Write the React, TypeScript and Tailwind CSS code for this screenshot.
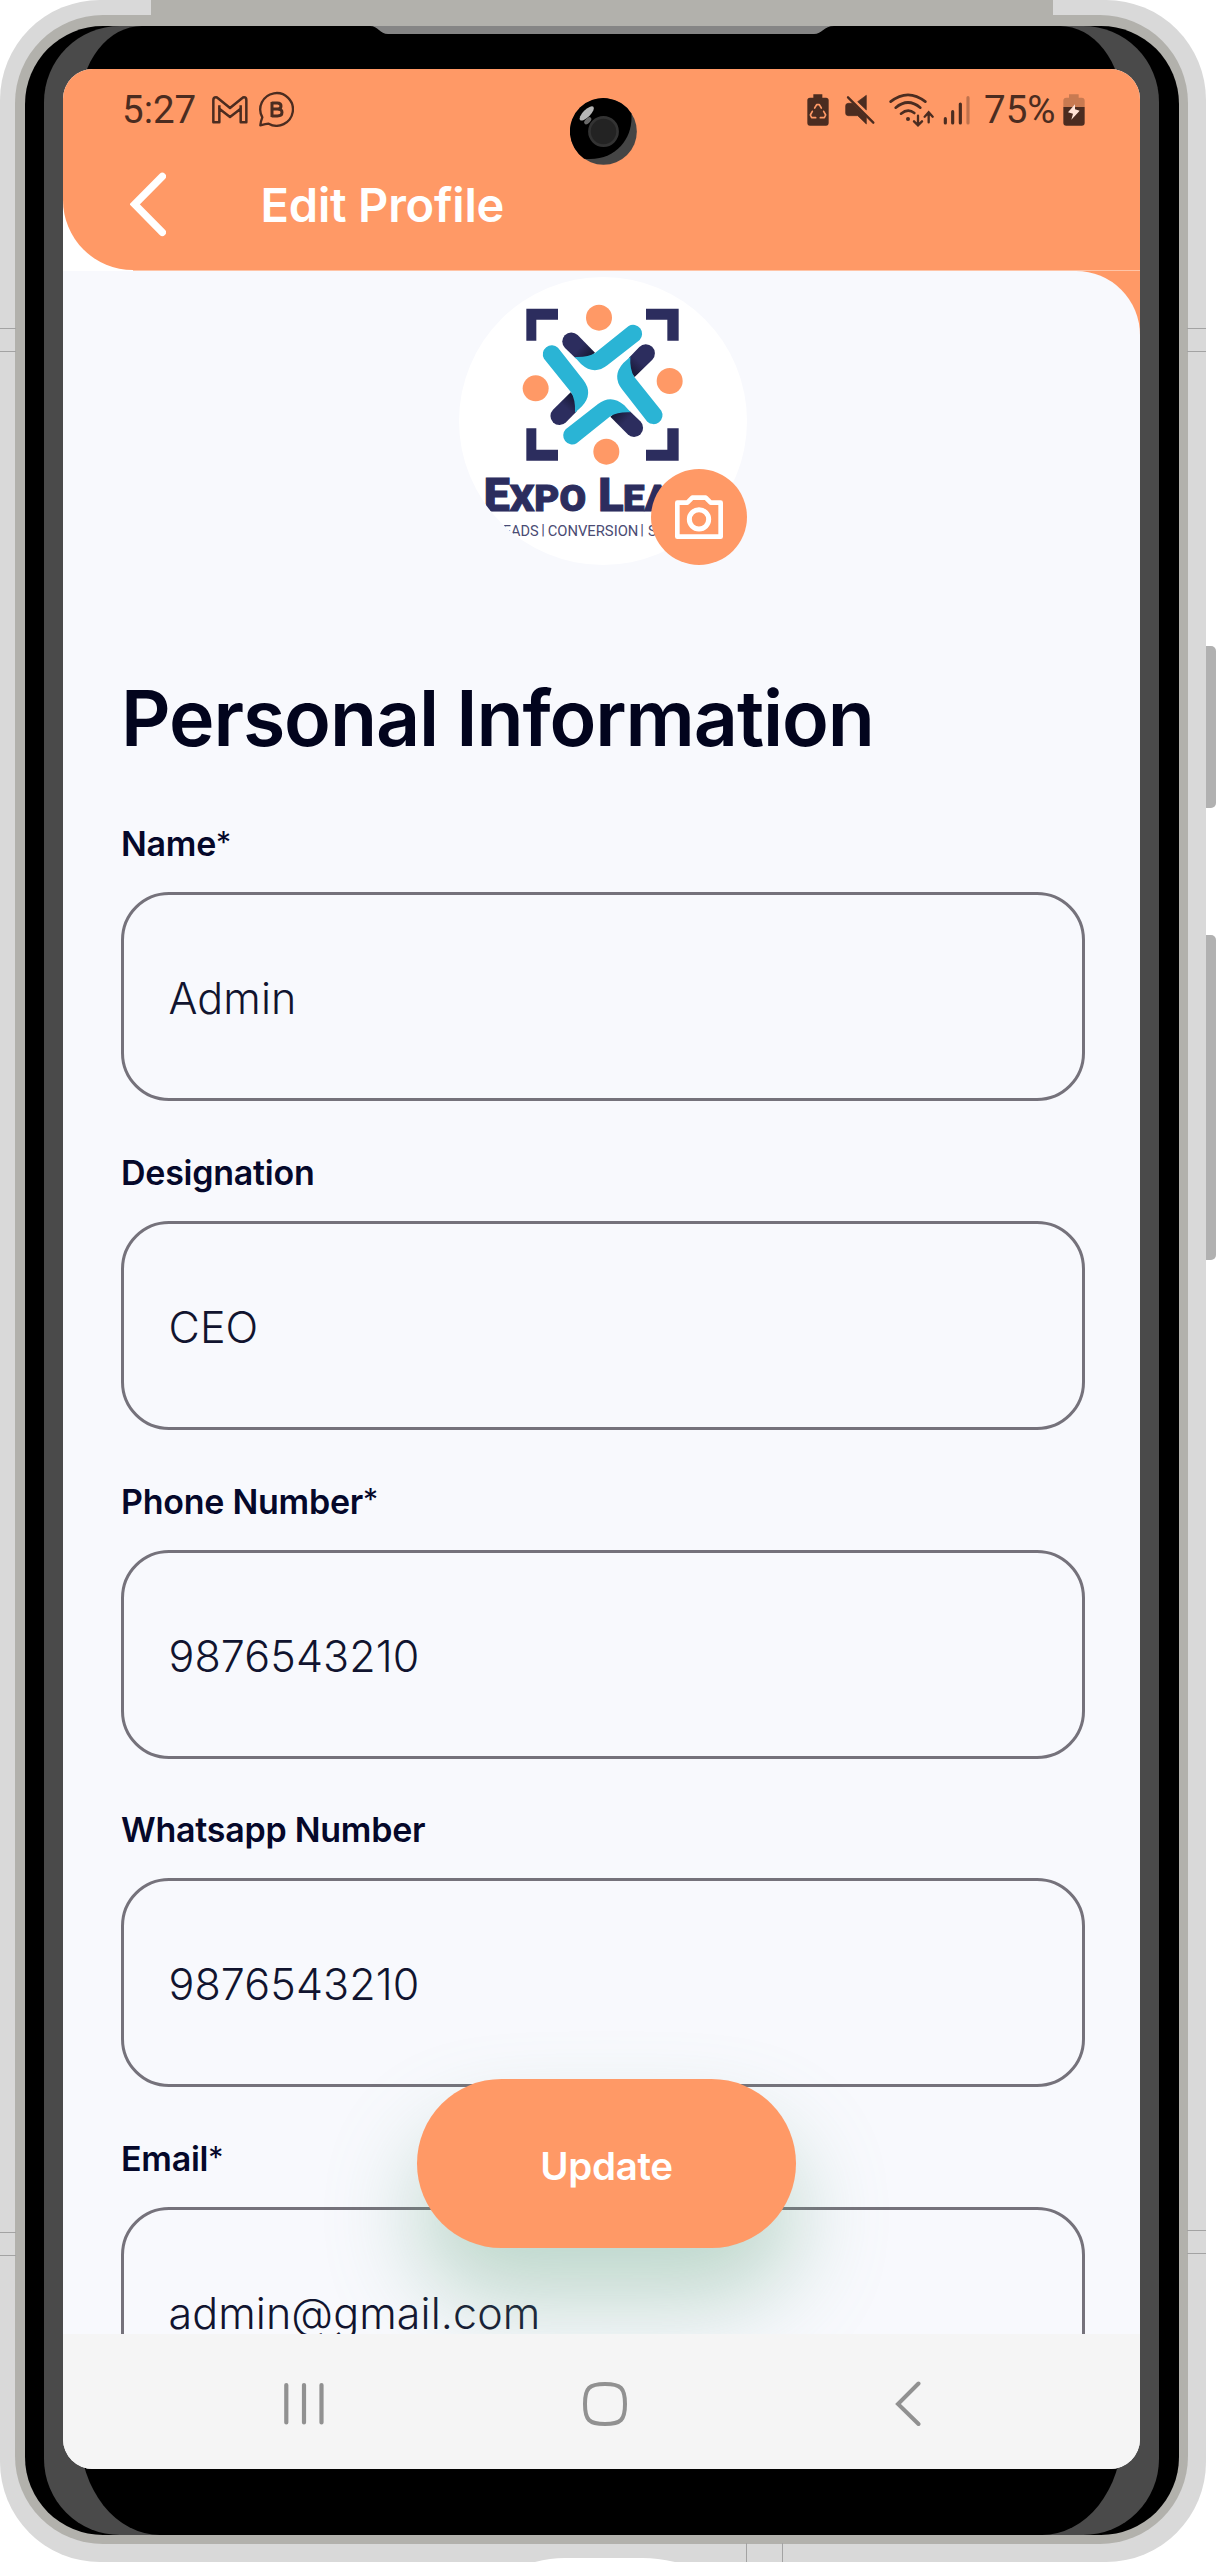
import type { ReactNode } from "react";

const INK = "#4b2c20";

function GmailIcon() {
  return (
    <svg className="h-[35px] w-[35.7px]" viewBox="637 270 107 105" fill="none" stroke={INK} strokeWidth="7.5" strokeLinejoin="round">
      <path d="M641 294 Q641 286 649 286 Q652 286 655 289 L691 318 L727 289 Q730 286 733 286 Q740 286 740 294 V361 H723 V320 L691 345 L659 320 V361 H641 Z" />
      <path d="M659 320 V310 M723 320 V310" />
    </svg>
  );
}

function BusinessChatIcon() {
  return (
    <svg className="h-[36px] w-[36px]" viewBox="776 271 108 108" fill="none" stroke={INK} strokeWidth="7">
      <path d="M789 350 A49 49 0 1 1 808 369 Q800 370 783 374 Q784 362 789 350 Z" strokeLinejoin="round" />
      <path d="M817 307 H834 Q845 307 845 316 Q845 325 834 325 H817 M834 325 Q848 325 848 335 Q848 346 834 346 H817 M818 304 V349" strokeWidth="9" />
    </svg>
  );
}

function BatteryRecycleIcon() {
  return (
    <svg className="h-[35px] w-[22px]" viewBox="32 270 66 105">
      <path d="M51 277 H78 V287 H89 Q97 287 97 295 V362 Q97 371 89 371 H41 Q33 371 33 362 V295 Q33 287 41 287 H51 Z" fill={INK} />
      <g fill="none" stroke="#ff9966" strokeWidth="5" strokeLinecap="round" strokeLinejoin="round">
        <path d="M55 318 L61 308 H69 L75 318" />
        <path d="M82 328 L88 339 L84 347 H72" />
        <path d="M48 328 L42 339 L46 347 H58" />
      </g>
    </svg>
  );
}

function MuteIcon() {
  return (
    <svg className="h-[35px] w-[30px]" viewBox="146 270 90 105">
      <path d="M210 280 V324 L184 299 Z" fill={INK} stroke={INK} strokeWidth="2" strokeLinejoin="round" />
      <path d="M156 304 H168 L210 344 V366 L184 341 H156 Q148 341 148 333 V312 Q148 304 156 304 Z" fill={INK} stroke={INK} strokeWidth="2" />
      <path d="M155 286 L231 362" stroke={INK} strokeWidth="7" strokeLinecap="round" />
    </svg>
  );
}

function WifiIcon() {
  return (
    <svg className="h-[35px] w-[45px]" viewBox="278 270 135 105" fill="none" stroke={INK} strokeWidth="8" strokeLinecap="round">
      <path d="M283 299 Q335 258 387 299" />
      <path d="M298 317 Q335 286 372 317" />
      <path d="M314 335 Q335 318 354 333" />
      <circle cx="335" cy="351" r="6" fill={INK} stroke="none" />
      <path d="M365 341 V368 M353 358 L365 370 L377 358 M397 361 V333 M385 344 L397 331 L409 344" strokeWidth="7" />
    </svg>
  );
}

function SignalIcon() {
  return (
    <svg className="h-[35px] w-[27px]" viewBox="440 270 81 105" stroke={INK} strokeWidth="9.5" strokeLinecap="round">
      <path d="M447 350 V363 M469 329 V363 M492 306 V363" />
      <path d="M515 287 V363" opacity="0.35" />
    </svg>
  );
}

function BatteryIcon() {
  return (
    <svg className="h-[35px] w-[22px]" viewBox="802 270 66 105">
      <path d="M820 277 H849 V287 H858 Q867 287 867 296 V315 H803 V296 Q803 287 812 287 H820 Z" fill="#c87a51" />
      <path d="M803 315 H867 V362 Q867 371 858 371 H812 Q803 371 803 362 Z" fill={INK} />
      <path d="M838 307 L817 331 L832 335 L827 353 L852 326 L838 322 Z" fill="#ffe3d6" />
    </svg>
  );
}

function StatusBar() {
  return (
    <div className="flex h-[80px] items-center pl-[59px] pr-[55px] font-['Roboto'] text-[38.5px] text-[#4b2c20]">
      <span className="mt-px w-[90px]">5:27</span>
      <GmailIcon />
      <span className="w-[10.5px]" />
      <BusinessChatIcon />
      <span className="flex-1" />
      <BatteryRecycleIcon />
      <span className="w-4" />
      <MuteIcon />
      <span className="w-[14px]" />
      <WifiIcon />
      <span className="w-[9px]" />
      <SignalIcon />
      <span className="mt-px ml-[14.5px] w-[79px]">75%</span>
      <BatteryIcon />
    </div>
  );
}

function Logo() {
  return (
    <svg className="size-full" viewBox="58 50 864 864">
      <defs>
        <linearGradient id="arm" x1="380" y1="235" x2="450" y2="300" gradientUnits="userSpaceOnUse">
          <stop offset="0.5" stopColor="#2c2d5e" />
          <stop offset="1" stopColor="#14152f" />
        </linearGradient>
      </defs>
      <path
        fill="#2c2d5e"
        d="M260 145H355V178H290V241H260Z M619 145H717V241H683V178H619Z M260 504H290V568H355V601H260Z M683 504H717V601H619V568H683Z"
      />
      {[0, 90, 180, 270].map((angle) => (
        <g key={angle} transform={`rotate(${angle} 489 373)`}>
          <circle cx="478" cy="172" r="39" fill="#ff9966" />
          <path d="M376 263 A27 27 0 0 1 414 224 L466 277 L440 300 L408 294 Z" fill="url(#arm)" />
          <path d="M405 290 Q444 292 466 278 L567 197 A27 27 0 0 1 600 239 L503 315 Q463 346 424 311 Z" fill="#2ab4d5" />
        </g>
      ))}
      <g fill="#2c2d5e" stroke="#2c2d5e" strokeWidth="3" className="font-['Roboto'] font-black">
        <text x="132" y="753" fontSize="137" textLength="78" lengthAdjust="spacingAndGlyphs">E</text>
        <text x="210" y="753" fontSize="110" textLength="229" lengthAdjust="spacingAndGlyphs">XPO</text>
        <text x="476" y="753" fontSize="137" textLength="76" lengthAdjust="spacingAndGlyphs">L</text>
        <text x="550" y="753" fontSize="110" textLength="290" lengthAdjust="spacingAndGlyphs">EADS</text>
      </g>
      <g fill="#4a4b73" fontSize="44" className="font-['Roboto'] font-normal">
        <text x="166" y="826" textLength="131" lengthAdjust="spacingAndGlyphs">LEADS</text>
        <text x="305" y="824">|</text>
        <text x="324" y="826" textLength="272" lengthAdjust="spacingAndGlyphs">CONVERSION</text>
        <text x="602" y="824">|</text>
        <text x="625" y="826" textLength="125" lengthAdjust="spacingAndGlyphs">SALES</text>
      </g>
    </svg>
  );
}

function Avatar() {
  return (
    <div className="relative ml-[338px] mt-[6px] size-[288px] shrink-0">
      <div className="size-full overflow-hidden rounded-full bg-white">
        <Logo />
      </div>
      <button className="absolute right-0 bottom-0 flex size-24 items-center justify-center rounded-full bg-[#ff9966]">
        <svg className="h-[44px] w-[48px]" viewBox="705 698 144 132" fill="none" stroke="#fff" strokeWidth="14">
          <path d="M712 721 H742 L757 706 H797 L812 721 H842 V823 H712 Z" strokeLinejoin="round" />
          <circle cx="777" cy="771" r="29" strokeWidth="15" />
        </svg>
      </button>
    </div>
  );
}

function Field({ label, required, value }: { label: string; required?: boolean; value: string }) {
  return (
    <div className="mb-[51.8px]">
      <label className="flex h-10 items-center text-[34px] leading-[40px] font-semibold tracking-[-0.25px] text-[#05082a]">
        {label}
        {required && <span className="-mt-[5px] text-[30px] font-normal">*</span>}
      </label>
      <div className="mt-[28px] flex h-[209px] items-center rounded-[48px] border-[3px] border-[#75727b] pt-[3px] pl-[44.5px] text-[43px] leading-[52px] font-light tracking-[0.1px] text-[#11142f]">
        {value}
      </div>
    </div>
  );
}

function NavBar() {
  return (
    <div className="flex h-[135px] shrink-0 items-center bg-[#f5f5f5] pt-[5px] pl-[221px]">
      <svg className="h-[46px] w-[40px]" viewBox="0 0 40 46" stroke="#919191" strokeWidth="4.2" strokeLinecap="round">
        <path d="M2.3 4 V41.5 M20 4 V41.5 M37.5 4 V41.5" />
      </svg>
      <svg className="ml-[259px] h-[46px] w-[44px]" viewBox="0 0 44 46" fill="none" stroke="#919191" strokeWidth="4">
        <path d="M22 3 C38 3 42 7 42 23 C42 39 38 43 22 43 C6 43 2 39 2 23 C2 7 6 3 22 3 Z" />
      </svg>
      <svg className="ml-[268px] h-[46px] w-[26px]" viewBox="0 0 26 46" fill="none" stroke="#919191" strokeWidth="4" strokeLinecap="round">
        <path d="M23.5 2.5 L3 23 L23.5 43" />
      </svg>
    </div>
  );
}

function Camera() {
  return (
    <svg className="absolute top-[29px] left-[507px] size-[67px]" viewBox="510 294 200 200">
      <circle cx="610" cy="394" r="99.5" fill="#454545" />
      <path d="M693 340 C700 410 650 485 552 475 A99.5 99.5 0 1 1 693 340 Z" fill="#000" />
      <circle cx="610" cy="394" r="42" fill="#232323" stroke="#333" strokeWidth="8" />
      <ellipse cx="560" cy="340" rx="28" ry="11" transform="rotate(-45 560 340)" fill="#b5b5b5" />
      <ellipse cx="563" cy="362" rx="13" ry="7" transform="rotate(-45 563 362)" fill="#6a6a6a" />
    </svg>
  );
}

function Screen() {
  return (
    <div className="relative -ml-[17px] flex h-[2400px] w-[1077px] flex-col overflow-hidden rounded-[30px] bg-white font-['Inter']">
      <header className="h-[201px] shrink-0 rounded-bl-[70px] bg-[#ff9966]">
        <StatusBar />
        <div className="flex h-[109px] items-center pl-[67px]">
          <svg className="mt-px h-[65px] w-[36px]" viewBox="390 514 108 195" fill="none" stroke="#fff" strokeWidth="22" strokeLinecap="round" strokeLinejoin="miter">
            <path d="M487 527 L404 611 L487 695" />
          </svg>
          <h1 className="mt-[2px] ml-[94.5px] text-[47px] leading-[56px] font-semibold tracking-[-0.2px] text-white">Edit Profile</h1>
        </div>
      </header>
      <div className="ml-[70px] h-px shrink-0 bg-[#ffc4a6]" />
      <main className="relative min-h-0 flex-1 overflow-hidden bg-[#ff9966]">
        <div className="flex h-full flex-col rounded-tr-[64px] bg-[#f8f9fd] pr-[55px] pl-[58px]">
          <Avatar />
          <h2 className="mt-[106.5px] mb-[60.5px] text-[77px] leading-[92px] font-semibold tracking-[-1.1px] text-[#02041d]">Personal Information</h2>
          <Field label="Name" required value="Admin" />
          <Field label="Designation" value="CEO" />
          <Field label="Phone Number" required value="9876543210" />
          <Field label="Whatsapp Number" value="9876543210" />
          <Field label="Email" required value="admin@gmail.com" />
        </div>
        <button className="absolute bottom-[86px] left-[354px] h-[169px] w-[379px] rounded-full bg-[#ff9966] pt-[6px] text-[38.5px] font-semibold tracking-[-0.3px] text-white shadow-[0_52px_90px_rgba(110,170,135,0.42)]">
          Update
        </button>
      </main>
      <NavBar />
      <Camera />
    </div>
  );
}

function Frame({ children }: { children: ReactNode }) {
  return (
    <div className="h-[2562px] w-[1206px] rounded-[100px] bg-[#d9d9d9] pt-[15px] pr-[18px] pb-[18px] pl-[15px]">
      <div className="h-full rounded-[88px] bg-[#b2b1ac] pt-[11px] pr-[9px] pb-[9px] pl-[10px]">
        <div className="h-full rounded-[78px] bg-black pr-[20px] pl-[19px]">
          <div className="h-full rounded-[76px] bg-[#4a4a4a] pr-[37px] pl-[36px]">
            <div className="h-full rounded-t-[62px_80px] rounded-b-[80px_101px] bg-black pt-[43px]">{children}</div>
          </div>
        </div>
      </div>
    </div>
  );
}

export default function App() {
  return (
    <div className="relative h-[2562px] w-[1216px] overflow-hidden bg-white">
      <Frame>
        <Screen />
      </Frame>
      {/* top metal band and earpiece */}
      <div className="absolute top-0 left-[151px] h-[26px] w-[902px] bg-[#b2b1ac]" />
      <svg className="absolute top-[26px] left-[370px] h-2 w-[464px]" viewBox="0 0 464 8">
        <path d="M0 0 C8 0 10 8 18 8 H444 C452 8 454 0 464 0 Z" fill="#858585" />
      </svg>
      {/* antenna seams */}
      <div className="absolute top-[328px] left-0 h-6 w-[16px] border-y border-[#a3a3a3]" />
      <div className="absolute top-[328px] left-[1187px] h-6 w-[19px] border-y border-[#a3a3a3]" />
      <div className="absolute top-[2232px] left-0 h-6 w-[16px] border-y border-[#a3a3a3]" />
      <div className="absolute top-[2230px] left-[1187px] h-6 w-[19px] border-y border-[#a3a3a3]" />
      <div className="absolute top-[2543px] left-[746px] h-[19px] w-[37px] border-x border-[#a3a3a3]" />
      {/* charging port */}
      <svg className="absolute top-[2557px] left-[535px] h-[5px] w-[140px]" viewBox="0 0 140 5">
        <path d="M0 5 Q15 1 30 1 H108 Q122 1 140 5 Z" fill="#fff" />
      </svg>
      {/* side keys */}
      <div className="absolute top-[646px] left-[1206px] h-[162px] w-[10px] rounded-r-[5px] bg-[#b1b1b1]" />
      <div className="absolute top-[935px] left-[1206px] h-[325px] w-[10px] rounded-r-[5px] bg-[#b1b1b1]" />
    </div>
  );
}
